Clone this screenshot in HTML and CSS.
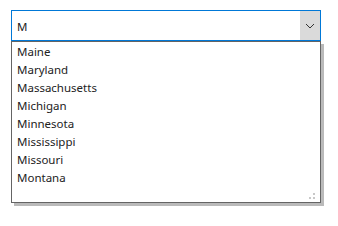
FILE: index.html
```html
<!DOCTYPE html>
<html lang="en">
<head>
    <meta charset="UTF-8">
    <meta name="viewport" content="width=device-width, initial-scale=1.0">
    <title>State Combo Box</title>
    <link rel="stylesheet" href="styles.css">
</head>
<body>
    <div class="combo">
        <div class="combo-field">
            <input type="text" class="combo-input" value="M">
            <span class="combo-button">
                <svg width="10" height="6" viewBox="0 0 10 6">
                    <path d="M1 1 L5 5 L9 1" fill="none" stroke="#333" stroke-width="1"/>
                </svg>
            </span>
        </div>
        <ul class="combo-list">
            <li>Maine</li>
            <li>Maryland</li>
            <li>Massachusetts</li>
            <li>Michigan</li>
            <li>Minnesota</li>
            <li>Mississippi</li>
            <li>Missouri</li>
            <li>Montana</li>
        </ul>
    </div>
</body>
</html>
```

FILE: styles.css
```css
body {
    margin: 0;
    padding: 10px 11px;
    font-family: "Noto Sans", "Open Sans", sans-serif;
    font-size: 11.5px;
    color: #222;
}
.combo {
    width: 310px;
}
.combo-field {
    display: flex;
    height: 31px;
    border: 1px solid #0078d7;
    box-sizing: border-box;
}
.combo-input {
    flex: 1;
    border: none;
    outline: none;
    padding: 1px 5px 0 5px;
    font-family: inherit;
    font-size: 11.5px;
    color: #222;
    background: white;
}
.combo-button {
    width: 20px;
    background-color: #dadada;
    display: flex;
    align-items: center;
    justify-content: center;
}
.combo-list {
    list-style: none;
    margin: 0;
    padding: 0 0 16px 0;
    height: 162px;
    box-sizing: border-box;
    border: 1px solid #646464;
    box-shadow: 3px 3px 0 #bababa;
    position: relative;
}
.combo-list li {
    height: 18px;
    line-height: 19px;
    padding-left: 5px;
}
.combo-list::after {
    content: "";
    position: absolute;
    right: 5px;
    bottom: 3px;
    width: 2px;
    height: 2px;
    background: #c8c8c8;
    box-shadow: -4px 0 0 #c8c8c8, 0 -4px 0 #c8c8c8;
}
```
